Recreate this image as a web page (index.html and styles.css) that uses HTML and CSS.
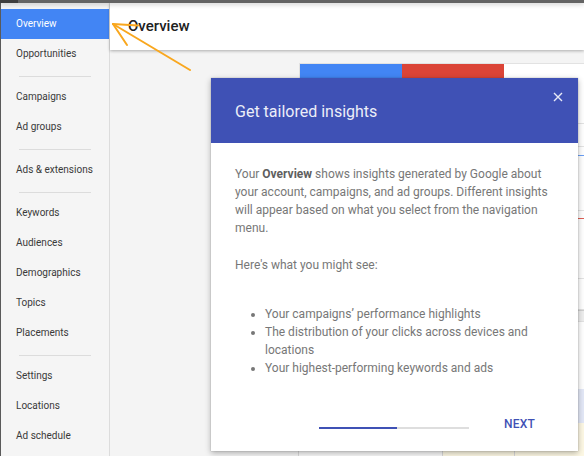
FILE: index.html
```html
<!DOCTYPE html>
<html>
<head>
<meta charset="utf-8">
<link rel="stylesheet" href="styles.css">
</head>
<body>
<div class="topbar"><div class="topbar-left"></div></div>
<div class="app">
  <nav class="sidebar">
    <div class="nav-item active">Overview</div>
    <div class="nav-item">Opportunities</div>
    <div class="nav-sep"></div>
    <div class="nav-item">Campaigns</div>
    <div class="nav-item">Ad groups</div>
    <div class="nav-sep"></div>
    <div class="nav-item">Ads &amp; extensions</div>
    <div class="nav-sep"></div>
    <div class="nav-item">Keywords</div>
    <div class="nav-item">Audiences</div>
    <div class="nav-item">Demographics</div>
    <div class="nav-item">Topics</div>
    <div class="nav-item">Placements</div>
    <div class="nav-sep"></div>
    <div class="nav-item">Settings</div>
    <div class="nav-item">Locations</div>
    <div class="nav-item">Ad schedule</div>
  </nav>
  <main class="main">
    <header class="page-header">Overview</header>
    <div class="content">
      <div class="card">
        <div class="tabs">
          <div class="tab tab-blue"></div>
          <div class="tab tab-red"></div>
          <div class="tab tab-white"></div>
        </div>
        <div class="chart">
          <div class="c-line l1"></div>
          <div class="c-line l2"></div>
          <div class="c-line blue"></div>
          <div class="c-line l3"></div>
          <div class="c-line red"></div>
          <div class="c-line l4"></div>
        </div>
      </div>
      <div class="table">
        <div class="t-row t-head"></div>
        <div class="t-row t-plain"></div>
        <div class="t-row t-blue"></div>
        <div class="t-row t-yellow">
          <div class="t-cell c1"></div>
          <div class="t-cell c2"></div>
          <div class="t-cell c3"></div>
        </div>
      </div>
    </div>
  </main>
</div>

<svg class="pointer" width="200" height="80" viewBox="0 0 200 80">
  <g stroke="#f9a71e" stroke-width="2" stroke-linecap="round" fill="none">
    <line x1="113" y1="24" x2="190" y2="70"/>
    <line x1="113" y1="24" x2="138" y2="25.5"/>
    <line x1="113" y1="24" x2="127" y2="45"/>
  </g>
</svg>

<div class="dialog">
  <div class="dialog-head">
    <span class="dialog-title">Get tailored insights</span>
    <svg class="close" width="10" height="10" viewBox="0 0 10 10">
      <path d="M1 1 L9 9 M9 1 L1 9" stroke="#e8eaf6" stroke-width="1.4"/>
    </svg>
  </div>
  <div class="dialog-body">
    <p>Your <b>Overview</b> shows insights generated by Google about your account, campaigns, and ad groups. Different insights will appear based on what you select from the navigation menu.</p>
    <p>Here's what you might see:</p>
    <ul>
      <li>Your campaigns’ performance highlights</li>
      <li>The distribution of your clicks across devices and locations</li>
      <li>Your highest-performing keywords and ads</li>
    </ul>
    <div class="dialog-foot">
      <div class="progress"><div class="progress-fill"></div></div>
      <span class="next">NEXT</span>
    </div>
  </div>
</div>
</body>
</html>
```

FILE: styles.css
```css
* { box-sizing: border-box; }
html, body { margin: 0; padding: 0; }
body {
  width: 584px;
  height: 456px;
  overflow: hidden;
  font-family: Roboto, "Liberation Sans", Arial, sans-serif;
  background: #f4f4f4;
  position: relative;
}
.topbar {
  height: 3px;
  background: #646464;
  position: relative;
  z-index: 3;
  box-shadow: 0 1px 5px rgba(0,0,0,0.25);
}
.topbar-left { width: 18px; height: 3px; background: #3e3e3e; }
.app { display: flex; height: 453px; }
.sidebar {
  width: 110px;
  flex: none;
  background: #f5f5f5;
  border-left: 1px solid #5a5a5a;
  border-right: 1px solid #dcdcdc;
  padding-top: 6px;
}
.nav-item {
  height: 30px;
  line-height: 30px;
  padding-left: 15px;
  font-size: 10px;
  color: #3a3a3a;
  white-space: nowrap;
}
.nav-item.active { background: #4285f4; color: #fff; }
.nav-sep {
  height: 13px;
  position: relative;
}
.nav-sep::after {
  content: "";
  position: absolute;
  left: 18px;
  width: 72px;
  top: 7px;
  height: 1px;
  background: #dcdcdc;
}
.main { flex: 1; display: flex; flex-direction: column; min-width: 0; }
.page-header {
  height: 47px;
  flex: none;
  background: #fff;
  padding-left: 18px;
  line-height: 46px;
  font-size: 15px;
  font-weight: 500;
  color: #212121;
  box-shadow: 0 1px 3px rgba(0,0,0,0.3);
  position: relative;
  z-index: 1;
}
.content { flex: 1; padding: 13px 0 0 189px; overflow: hidden; }
.card {
  width: 300px;
  background: #fff;
  border: 1px solid #e2e2e2;
}
.tabs { display: flex; height: 30px; }
.tab { width: 102px; }
.tab-blue { background: #4285f4; }
.tab-red { background: #db4437; }
.tab-white { flex: 1; background: #fff; }
.chart { height: 215px; position: relative; }
.c-line { position: absolute; right: 0; width: 60px; height: 1px; background: #e3e3e3; }
.l1 { top: 29px; }
.l2 { top: 52px; }
.blue { top: 61px; background: #6a9ff6; }
.l3 { top: 116px; }
.red { top: 124px; background: #e06055; }
.l4 { top: 184px; }
.table { width: 300px; margin-left: -1px; }
.t-head { height: 12px; background: #eeeeee; border-top: 1px solid #d0d0d0; border-bottom: 1px solid #e2e2e2; }
.t-plain { height: 67px; background: #fff; }
.t-blue { height: 34px; background: #e3e8f7; }
.t-yellow { height: 40px; display: flex; background: #fdf8e4; }
.t-cell { height: 100%; border-left: 1px solid #d8d8d8; }
.c1 { width: 144px; background: #f8f8f8; }
.c2 { width: 72px; background: #fdf8e4; }
.c3 { flex: 1; background: #fdf8e4; }

.pointer { position: absolute; left: 0; top: 0; z-index: 5; }

.dialog {
  position: absolute;
  left: 211px;
  top: 78px;
  width: 367px;
  height: 373px;
  background: #fff;
  box-shadow: 0 2px 6px rgba(0,0,0,0.3), 0 0 1px rgba(0,0,0,0.3);
  z-index: 4;
}
.dialog-head {
  height: 65px;
  background: #3f51b5;
  padding-left: 24px;
  display: flex;
  align-items: center;
  position: relative;
}
.dialog-title { font-size: 16px; color: #eceef8; margin-top: 1px; }
.close { position: absolute; right: 15px; top: 14px; }
.dialog-body {
  padding: 22px 24px 0 24px;
  font-size: 12px;
  line-height: 18px;
  color: #777;
}
.dialog-body p { margin: 0 0 19px 0; }
.dialog-body b { color: #5f5f5f; font-weight: 700; }
.dialog-body ul { margin: 31px 0 0 0; padding-left: 30px; }
.dialog-foot {
  display: flex;
  align-items: flex-start;
  margin-top: 37px;
  padding-left: 84px;
  height: 20px;
}
.progress { width: 150px; height: 2px; background: #dedede; margin-top: 13px; }
.progress-fill { width: 78px; height: 2px; background: #3f51b5; }
.next {
  margin-left: auto;
  margin-right: 19px;
  font-size: 12px;
  line-height: 20px;
  font-weight: 500;
  color: #3f51b5;
  letter-spacing: 0.2px;
}
```
